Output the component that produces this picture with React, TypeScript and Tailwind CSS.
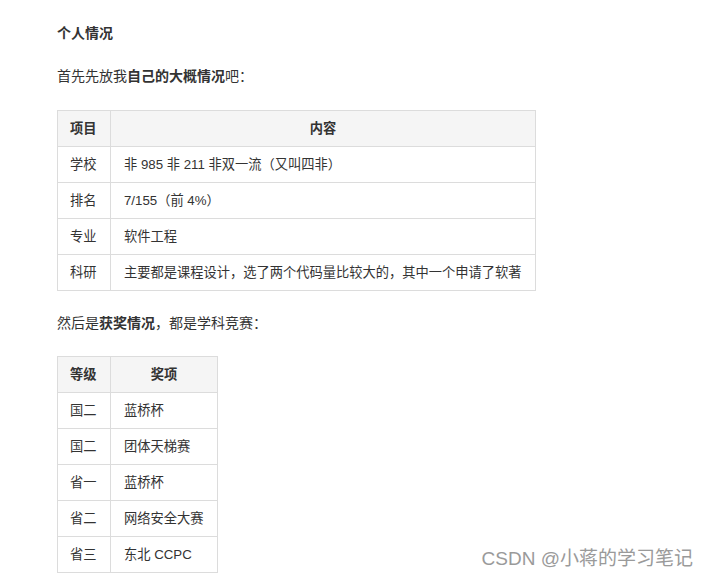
const font = "font-['Liberation_Sans','Noto_Sans_CJK_SC',sans-serif]";

const profile = [
  ['学校', '非 985 非 211 非双一流（又叫四非）'],
  ['排名', '7/155（前 4%）'],
  ['专业', '软件工程'],
  ['科研', '主要都是课程设计，选了两个代码量比较大的，其中一个申请了软著'],
];

const awards = [
  ['国二', '蓝桥杯'],
  ['国二', '团体天梯赛'],
  ['省一', '蓝桥杯'],
  ['省二', '网络安全大赛'],
  ['省三', '东北 CCPC'],
];

function Table({ head, rows, width }: { head: [string, string]; rows: string[][]; width: string }) {
  return (
    <table className={`border-collapse ${width} text-[13.25px] text-[#333]`}>
      <thead>
        <tr className="h-[36px] bg-[#f5f5f5]">
          <th className="w-[53px] border border-[#dcdcdc] px-[12px] text-left font-semibold">{head[0]}</th>
          <th className="border border-[#dcdcdc] px-[13px] text-center font-semibold">{head[1]}</th>
        </tr>
      </thead>
      <tbody>
        {rows.map(([a, b], i) => (
          <tr key={i} className="h-[36px]">
            <td className="border border-[#dcdcdc] px-[12px] whitespace-nowrap">{a}</td>
            <td className="border border-[#dcdcdc] px-[13px] whitespace-nowrap">{b}</td>
          </tr>
        ))}
      </tbody>
    </table>
  );
}

export default function App() {
  return (
    <main className={`relative min-h-screen bg-white ${font} text-[#333] pl-[57px] pt-[22px]`}>
      <p className="text-[14px] leading-[22px] font-bold">个人情况</p>
      <p className="mt-[21px] text-[14px] leading-[22px]">
        首先先放我<b>自己的大概情况</b>吧：
      </p>
      <div className="mt-[23px]">
        <Table head={['项目', '内容']} rows={profile} width="w-[479px]" />
      </div>
      <p className="mt-[21px] text-[14px] leading-[22px]">
        然后是<b>获奖情况</b>，都是学科竞赛：
      </p>
      <div className="mt-[22px]">
        <Table head={['等级', '奖项']} rows={awards} width="w-[161px]" />
      </div>
      <div className="absolute right-[16px] top-[546px] text-[19px] leading-[26px] text-[#9a9a9a] [text-shadow:0_0_2px_#fff,1px_1px_1px_#fff]">
        CSDN @小蒋的学习笔记
      </div>
    </main>
  );
}
